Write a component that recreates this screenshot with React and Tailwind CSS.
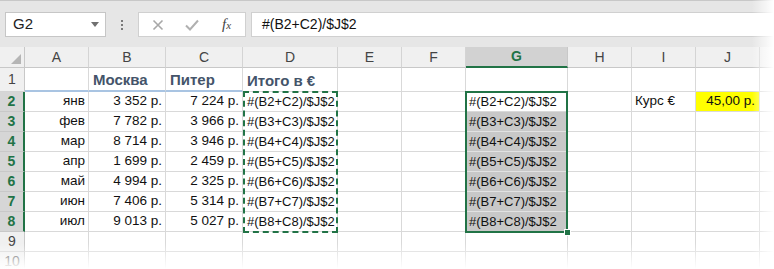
import React from "react";

const rows = [
  ["янв", "3 352 р.", "7 224 р."],
  ["фев", "7 782 р.", "3 966 р."],
  ["мар", "8 714 р.", "3 946 р."],
  ["апр", "1 699 р.", "2 459 р."],
  ["май", "4 994 р.", "2 325 р."],
  ["июн", "7 406 р.", "5 314 р."],
  ["июл", "9 013 р.", "5 027 р."],
];

const cols = ["A", "B", "C", "D", "E", "F", "G", "H", "I", "J", ""];

const cell = "border-r border-b border-[#d9d9d9] h-full flex items-center overflow-hidden whitespace-nowrap";

function RowHead({ n, active }) {
  return (
    <div
      className={
        active
          ? "h-full flex items-center justify-center bg-[#d6d6d6] border-b border-[#c8c8c8] border-r-2 border-r-[#217346] text-[#217346] font-bold text-[14px]"
          : "h-full flex items-center justify-center bg-[#f0f0f0] border-b border-[#d4d4d4] border-r border-r-[#c8c8c8] text-[#444] text-[14px]"
      }
    >
      {n}
    </div>
  );
}

export default function App() {
  return (
    <div className="relative w-[774px] h-[269px] overflow-hidden bg-white font-['Liberation_Sans',Arial,sans-serif] text-[13.5px] text-[#111]">
      {/* toolbar */}
      <div className="h-[47px] bg-[#e6e6e6] border-t border-[#c8c8c8] flex items-start pt-[11px] pl-[5px] gap-0">
        <div className="w-[101px] h-[25px] bg-white border border-[#c6c6c6] flex items-center justify-between pl-[7px] pr-[6px]">
          <span className="text-[15px] text-[#222]">G2</span>
          <svg width="8" height="5" viewBox="0 0 8 5"><path d="M0 0 L8 0 L4 5 Z" fill="#707070" /></svg>
        </div>
        <div className="w-[32px] h-[25px] flex flex-col items-center justify-center gap-[2px]">
          <span className="w-[2px] h-[2px] bg-[#7a7a7a]" />
          <span className="w-[2px] h-[2px] bg-[#7a7a7a]" />
          <span className="w-[2px] h-[2px] bg-[#7a7a7a]" />
        </div>
        <div className="w-[108px] h-[25px] bg-white border border-[#d0d0d0] flex items-center pl-[13px]">
          <svg width="12" height="12" viewBox="0 0 12 12" className="mr-[21px]"><path d="M1.5 1.5 L10.5 10.5 M10.5 1.5 L1.5 10.5" stroke="#a8a8a8" strokeWidth="1.6" /></svg>
          <svg width="14" height="12" viewBox="0 0 14 12" className="mr-[23px]"><path d="M1 6.5 L5 10.5 L13 1.5" stroke="#b0b0b0" strokeWidth="2" fill="none" /></svg>
          <span className="font-['Liberation_Serif',serif] italic text-[15px] text-[#444] leading-none">f<span className="text-[11px]">x</span></span>
        </div>
        <div className="ml-[5px] flex-1 h-[25px] bg-white border border-[#d0d0d0] flex items-center pl-[10px] text-[14px] text-[#111]">
          #(B2+C2)/$J$2
        </div>
      </div>

      {/* sheet */}
      <div className="relative">
        <div className="grid grid-cols-[25px_64px_77px_77px_95px_64px_64px_102px_64px_64px_64px_1fr] grid-rows-[21px_24px_repeat(9,20px)]">
          {/* header row */}
          <div className="h-full bg-[#f0f0f0] border-r border-b border-[#c8c8c8] flex items-end justify-end p-[3px]">
            <svg width="10" height="10" viewBox="0 0 10 10"><path d="M10 0 L10 10 L0 10 Z" fill="#b5b5b5" /></svg>
          </div>
          {cols.map((c, i) =>
            c === "G" ? (
              <div key={i} className="h-full flex items-center justify-center bg-[#d2d2d2] border-r border-[#c8c8c8] border-b-2 border-b-[#217346] text-[#217346] font-bold text-[14px]">G</div>
            ) : (
              <div key={i} className="h-full flex items-center justify-center bg-[#f0f0f0] border-r border-[#d4d4d4] border-b border-b-[#c8c8c8] text-[#444] text-[14px]">{c}</div>
            )
          )}

          {/* row 1 */}
          <RowHead n="1" />
          <div className={cell + " border-b-2 border-b-[#a9c4e2]"} />
          <div className={cell + " border-b-2 border-b-[#a9c4e2] pl-[4px] font-bold text-[15px] text-[#44546a] pt-[3px]"}>Москва</div>
          <div className={cell + " border-b-2 border-b-[#a9c4e2] pl-[4px] font-bold text-[15px] text-[#44546a] pt-[3px]"}>Питер</div>
          <div className={cell + " pl-[4px] font-bold text-[15px] text-[#44546a] pt-[3px]"}>Итого в €</div>
          <div className={cell} />
          <div className={cell} />
          <div className={cell} />
          <div className={cell} />
          <div className={cell} />
          <div className={cell} />
          <div className={cell} />

          {rows.map((r, i) => {
            const n = i + 2;
            return (
              <React.Fragment key={n}>
                <RowHead n={String(n)} active />
                <div className={cell + " justify-end pr-[3px]"}>{r[0]}</div>
                <div className={cell + " justify-end pr-[3px]"}>{r[1]}</div>
                <div className={cell + " justify-end pr-[3px]"}>{r[2]}</div>
                <div className={cell + " pl-[4px] text-[13px]"}>{`#(B${n}+C${n})/$J$2`}</div>
                <div className={cell} />
                <div className={cell} />
                <div
                  className={
                    n === 2
                      ? cell + " pl-[3px] text-[13px]"
                      : "h-full flex items-center overflow-hidden whitespace-nowrap bg-[#c8c8c8] border-r border-b border-[#e2e2e2] pl-[3px] text-[13px]"
                  }
                >
                  {`#(B${n}+C${n})/$J$2`}
                </div>
                <div className={cell} />
                <div className={cell + " pl-[3px]"}>{n === 2 ? "Курс €" : ""}</div>
                <div className={n === 2 ? cell + " bg-[#ffff00] justify-end pr-[4px]" : cell}>{n === 2 ? "45,00 р." : ""}</div>
                <div className={cell} />
              </React.Fragment>
            );
          })}

          {[9, 10].map((n) => (
            <React.Fragment key={n}>
              <RowHead n={String(n)} />
              {cols.map((c, i) => (
                <div key={i} className={cell} />
              ))}
            </React.Fragment>
          ))}
        </div>

        {/* copy marquee D2:D8 */}
        <div className="absolute left-[243px] top-[44px] w-[95px] h-[142px] border-2 border-dashed border-[#217346] pointer-events-none" />
        {/* selection G2:G8 */}
        <div className="absolute left-[465px] top-[44px] w-[103px] h-[142px] border-2 border-[#217346] pointer-events-none" />
        <div className="absolute left-[564px] top-[182px] w-[7px] h-[7px] bg-[#217346] border border-white pointer-events-none" />
      </div>

      {/* fades */}
      <div className="absolute right-0 top-0 h-full w-[22px] bg-gradient-to-r from-white/0 to-white pointer-events-none" />
      <div className="absolute left-0 bottom-0 w-full h-[26px] bg-gradient-to-b from-white/0 to-white pointer-events-none" />
    </div>
  );
}
